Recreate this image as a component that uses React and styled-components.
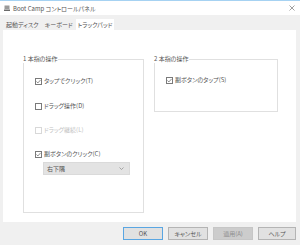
import React from 'react'
import styled, { createGlobalStyle } from 'styled-components'

const GlobalStyle = createGlobalStyle`
  *{ margin:0; padding:0; box-sizing:border-box; }
  body{
    background:#f0f0f0;
    font-family:"Noto Sans CJK JP","Noto Sans",sans-serif;
    font-feature-settings:"palt";
    color:#555;
  }
`

const Window = styled.div`
  width:300px;
  height:245px;
  display:flex;
  flex-direction:column;
  background:#f0f0f0;
  border-top:1px solid #a6d2f2;
`
const TitleBar = styled.div`
  height:14px;
  background:#fff;
  display:flex;
  align-items:center;
  padding:0 5px 0 4px;
  font-size:6px;
  color:#555;
`
const TitleText = styled.span`
  flex:1;
  margin-left:3px;
`
const Tabs = styled.div`
  display:flex;
  align-items:flex-end;
  height:15px;
  padding:0 0 0 3px;
`
const Tab = styled.div`
  font-size:6px;
  line-height:8px;
  height:${p => p.$active ? '11px' : '10px'};
  padding:0 ${p => p.$active ? '2px' : '3px'};
  display:flex;
  align-items:center;
  background:${p => p.$active ? '#fff' : 'transparent'};
  color:#555;
`
const Panel = styled.div`
  margin:0 4px 0 3px;
  height:192px;
  background:#fff;
  display:flex;
  align-items:flex-start;
  gap:10px;
  padding:29px 0 0 20px;
`
const Group = styled.div`
  position:relative;
  width:${p => p.$w}px;
  height:${p => p.$h}px;
  border:1px solid #e0e0e0;
  padding:0 0 0 11px;
  display:flex;
  flex-direction:column;
  align-items:flex-start;
`
const Legend = styled.span`
  position:absolute;
  top:-5px;
  left:-1px;
  font-size:6px;
  line-height:8px;
  padding:0 1px 0 0;
  background:#fff;
  color:#555;
`
const Check = styled.div`
  display:flex;
  align-items:center;
  gap:2px;
  height:8px;
  font-size:6px;
  line-height:8px;
  margin-top:${p => p.$top}px;
  color:${p => p.$disabled ? '#c2c2c2' : '#555'};
`
const Box = styled.span`
  width:7px;
  height:7px;
  border:1px solid ${p => p.$disabled ? '#d8d8d8' : '#7a7a7a'};
  display:flex;
  align-items:center;
  justify-content:center;
  background:#fff;
`
const Select = styled.div`
  margin:4px 0 0 8px;
  width:87px;
  height:13px;
  background:#e3e3e3;
  border:1px solid #dadada;
  display:flex;
  align-items:center;
  justify-content:space-between;
  padding:0 5px 0 3px;
  font-size:6px;
  color:#555;
`
const Footer = styled.div`
  flex:1;
  display:flex;
  justify-content:flex-end;
  align-items:center;
  gap:5px;
  padding:0 4px 1px 0;
`
const Button = styled.div`
  width:${p => p.$w || 40}px;
  height:13px;
  font-size:6px;
  display:flex;
  align-items:center;
  justify-content:center;
  background:${p => p.$disabled ? '#cccccc' : '#e1e1e1'};
  border:1px solid ${p => p.$primary ? '#5aa6e2' : p.$disabled ? '#c6c6c6' : '#b4b4b4'};
  color:${p => p.$disabled ? '#8e8e8e' : '#555'};
`

const Tick = () => (
  <svg width="6" height="5" viewBox="0 0 6 5">
    <path d="M0.5 2.5 L2.3 4.2 L5.5 0.6" fill="none" stroke="#555" strokeWidth="0.8" />
  </svg>
)

const CheckItem = ({ checked, disabled, top, children }) => (
  <Check $top={top} $disabled={disabled}>
    <Box $disabled={disabled}>{checked && <Tick />}</Box>
    {children}
  </Check>
)

export default function App() {
  return (
    <>
      <GlobalStyle />
      <Window>
        <TitleBar>
          <svg width="6" height="6" viewBox="0 0 6 6">
            <rect x="0.5" y="0.5" width="5" height="3.5" fill="#9a9a9a" />
            <rect x="0" y="4.5" width="6" height="1.5" fill="#6a6a6a" />
          </svg>
          <TitleText>Boot Camp コントロールパネル</TitleText>
          <svg width="6" height="6" viewBox="0 0 6 6">
            <path d="M0.5 0.5 L5.5 5.5 M5.5 0.5 L0.5 5.5" stroke="#888" strokeWidth="0.8" />
          </svg>
        </TitleBar>
        <Tabs>
          <Tab>起動ディスク</Tab>
          <Tab>キーボード</Tab>
          <Tab $active>トラックパッド</Tab>
        </Tabs>
        <Panel>
          <Group $w={121} $h={154}>
            <Legend>1 本指の操作</Legend>
            <CheckItem checked top={17}>タップでクリック(T)</CheckItem>
            <CheckItem top={17}>ドラッグ操作(D)</CheckItem>
            <CheckItem disabled top={16}>ドラッグ継続(L)</CheckItem>
            <CheckItem checked top={16}>副ボタンのクリック(C)</CheckItem>
            <Select>
              <span>右下隅</span>
              <svg width="5" height="3" viewBox="0 0 5 3">
                <path d="M0.5 0.5 L2.5 2.5 L4.5 0.5" fill="none" stroke="#888" strokeWidth="0.7" />
              </svg>
            </Select>
          </Group>
          <Group $w={124} $h={53}>
            <Legend>2 本指の操作</Legend>
            <CheckItem checked top={16}>副ボタンのタップ(S)</CheckItem>
          </Group>
        </Panel>
        <Footer>
          <Button $primary>OK</Button>
          <Button>キャンセル</Button>
          <Button $disabled>適用(A)</Button>
          <Button $w={38}>ヘルプ</Button>
        </Footer>
      </Window>
    </>
  )
}
